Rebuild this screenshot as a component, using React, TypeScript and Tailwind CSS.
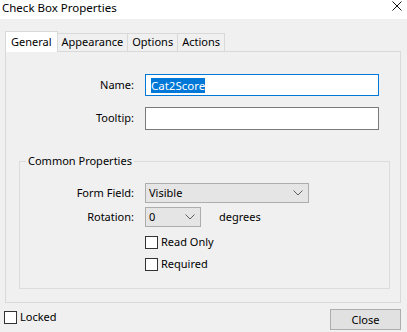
import { useState } from "react";

const font = { fontFamily: '"Segoe UI", "Noto Sans", "Open Sans", sans-serif' };

function Chevron() {
  return (
    <svg width="10" height="6" viewBox="0 0 10 6" className="shrink-0">
      <path d="M0.5 0.5 L5 5 L9.5 0.5" fill="none" stroke="#606060" strokeWidth="1" />
    </svg>
  );
}

function Check({ label }: { label: string }) {
  return (
    <label className="flex items-center h-[14px]">
      <span className="w-[13px] h-[13px] border border-[#333] bg-white shrink-0" />
      <span className="ml-[3px] text-[11px] leading-[14px] text-black">{label}</span>
    </label>
  );
}

export default function App() {
  const [tab] = useState("General");
  const tabs = ["General", "Appearance", "Options", "Actions"];

  return (
    <div
      className="w-[407px] h-[332px] bg-[#f0f0f0] flex flex-col overflow-hidden text-black text-[11px]"
      style={font}
    >
      {/* title bar */}
      <div className="h-[19px] bg-white flex justify-between items-start shrink-0">
        <span className="ml-[2px] text-[11.5px] leading-[15px]">Check Box Properties</span>
        <svg width="10" height="10" viewBox="0 0 10 10" className="mr-[5px] mt-[1px]">
          <path d="M0.5 0.5 L9.5 9.5 M9.5 0.5 L0.5 9.5" stroke="#111" strokeWidth="1" />
        </svg>
      </div>

      {/* tabs */}
      <div className="flex items-end ml-[5px] mt-[12px] h-[20px] relative z-10">
        {tabs.map((t, i) =>
          t === tab ? (
            <div
              key={t}
              className="h-[21px] px-[5px] bg-white border border-b-0 border-[#d9d9d9] flex items-center -mb-[1px]"
            >
              {t}
            </div>
          ) : (
            <div
              key={t}
              className={
                "h-[18px] px-[4px] bg-[#f0f0f0] border border-b-0 border-[#d9d9d9] flex items-center " +
                (i > 0 ? "-ml-[1px]" : "")
              }
            >
              {t}
            </div>
          )
        )}
      </div>

      {/* panel */}
      <div className="ml-[5px] mr-[6px] h-[252px] border border-[#d9d9d9] bg-[#f0f0f0] flex flex-col">
        <div className="flex items-center mt-[22px]">
          <span className="w-[128px] text-right">Name:</span>
          <div className="ml-[11px] w-[234px] h-[22px] border border-[#0078d7] bg-white flex items-center px-[5px]">
            <span className="bg-[#0078d7] text-white text-[11.5px] leading-[15px]">Cat2Score</span>
          </div>
        </div>
        <div className="flex items-center mt-[11px]">
          <span className="w-[128px] text-right">Tooltip:</span>
          <div className="ml-[11px] w-[234px] h-[23px] border border-[#7a7a7a] bg-white" />
        </div>

        <fieldset className="ml-[13px] mr-[10px] mt-[24px] h-[135px] border border-[#dcdcdc] flex flex-col">
          <legend className="ml-[6px] px-[2px] leading-[14px]">Common Properties</legend>
          <div className="flex items-center mt-[15px]">
            <span className="w-[114px] text-right">Form Field:</span>
            <div className="ml-[11px] w-[164px] h-[20px] border border-[#adadad] bg-[#e5e5e5] flex items-center justify-between pl-[3px] pr-[5px]">
              <span>Visible</span>
              <Chevron />
            </div>
          </div>
          <div className="flex items-center mt-[4px]">
            <span className="w-[114px] text-right">Rotation:</span>
            <div className="ml-[11px] w-[56px] h-[20px] border border-[#adadad] bg-[#e5e5e5] flex items-center justify-between pl-[3px] pr-[5px]">
              <span>0</span>
              <Chevron />
            </div>
            <span className="ml-[18px]">degrees</span>
          </div>
          <div className="ml-[125px] mt-[8px]">
            <Check label="Read Only" />
          </div>
          <div className="ml-[125px] mt-[8px]">
            <Check label="Required" />
          </div>
        </fieldset>
      </div>

      {/* bottom row */}
      <div className="flex justify-between items-start mt-[6px]">
        <div className="ml-[4px] mt-[1px]">
          <Check label="Locked" />
        </div>
        <button className="mr-[6px] w-[71px] h-[21px] border border-[#adadad] bg-[#e1e1e1] text-[11px] leading-[19px]">
          Close
        </button>
      </div>
    </div>
  );
}
